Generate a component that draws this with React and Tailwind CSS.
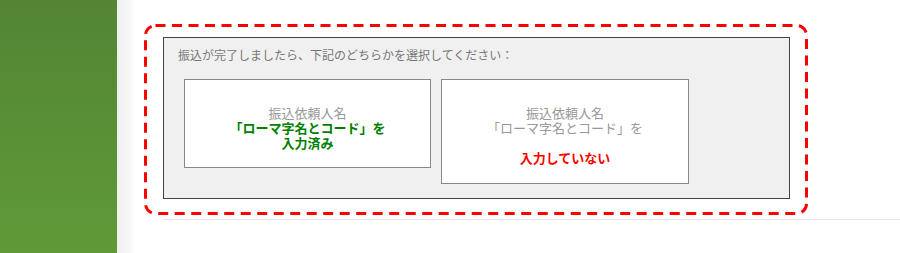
export default function App() {
  const font = { fontFamily: '"Noto Sans CJK JP", "Noto Sans", sans-serif' };

  return (
    <div className="flex h-[253px] w-[900px] overflow-hidden bg-white" style={font}>
      {/* left green sidebar */}
      <div className="h-full w-[117px] shrink-0 bg-gradient-to-b from-[#538534] to-[#5f9a37]" />
      <div className="h-full w-[16px] shrink-0 bg-gradient-to-r from-[#efefef] to-[#fbfbfb]" />

      <div className="flex-1">
        {/* red dashed frame (drawn with svg for the longer dashes) */}
        <div className="relative ml-[11px] mt-[24px] w-[664px] pb-[16px] pl-[19px] pr-[18px] pt-[13px]">
          <svg className="pointer-events-none absolute inset-0 h-full w-full" preserveAspectRatio="none">
            <rect
              x="1.5"
              y="1.5"
              width="661"
              height="calc(100% - 3px)"
              rx="10"
              fill="none"
              stroke="#ff0000"
              strokeWidth="3"
              strokeDasharray="10 6.5"
            />
          </svg>

          <div className="border border-[#444] bg-[#f0f0f0] pb-[14px]">
            <p className="pl-[14px] pt-[8px] text-[12px] leading-[18px] text-[#777]">
              振込が完了しましたら、下記のどちらかを選択してください：
            </p>

            <div className="ml-[20px] mt-[15px] flex items-start gap-[10px]">
              <button className="w-[247px] border border-[#888] bg-white pb-[17px] pt-[25px] text-center text-[13px] leading-[15px]">
                <span className="block text-[#999]">振込依頼人名</span>
                <span className="block font-bold text-[#008000]">「ローマ字名とコード」を</span>
                <span className="block font-bold text-[#008000]">入力済み</span>
              </button>
              <button className="w-[248px] border border-[#888] bg-white pb-[18px] pt-[25px] text-center text-[13px] leading-[15px]">
                <span className="block text-[#999]">振込依頼人名</span>
                <span className="block text-[#999]">「ローマ字名とコード」を</span>
                <span className="block h-[15px]" />
                <span className="block font-bold text-[#ff0000]">入力していない</span>
              </button>
            </div>
          </div>
        </div>

        <div className="ml-[30px] mt-[4px] border-t border-[#e8e8e8]" />
      </div>
    </div>
  );
}
